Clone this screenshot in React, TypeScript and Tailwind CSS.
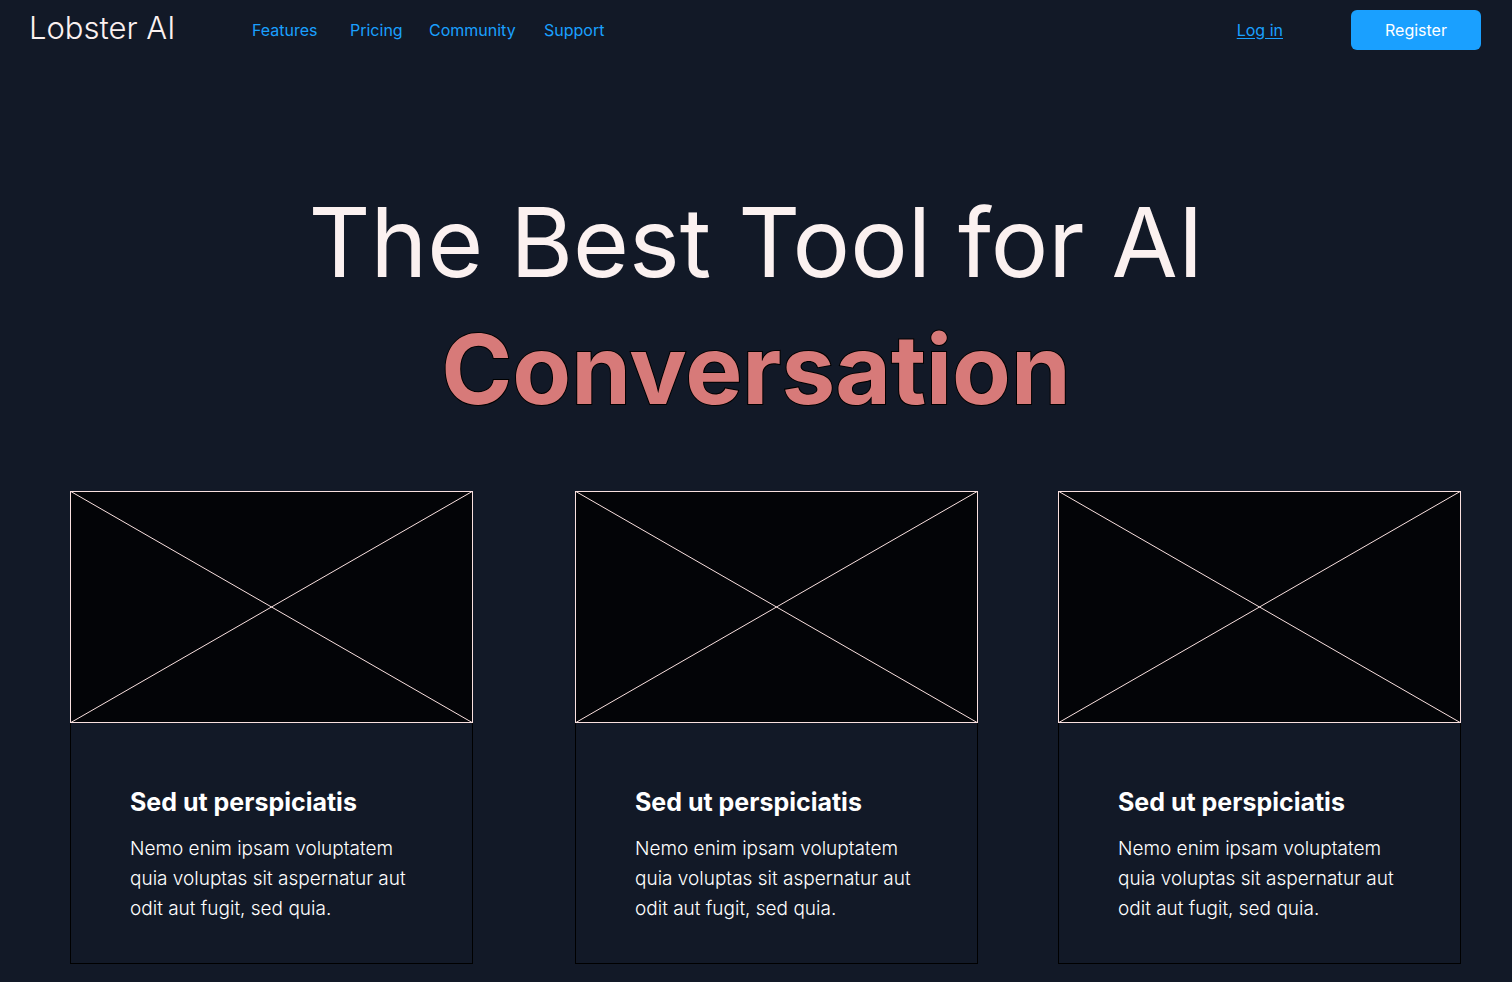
const links = ["Features", "Pricing", "Community", "Support"];

const cards = [
  { id: 1, spacing: "mr-[22px]" },
  { id: 2, spacing: "" },
  { id: 3, spacing: "" },
];

function Placeholder() {
  return (
    <svg
      className="block h-[232px] w-full bg-[#030407] text-[#f9e0df]"
      role="img"
      aria-label="Image placeholder"
    >
      <line x1="0" y1="0" x2="100%" y2="100%" stroke="currentColor" />
      <line x1="0" y1="100%" x2="100%" y2="0" stroke="currentColor" />
      <rect width="100%" height="100%" fill="none" stroke="currentColor" strokeWidth="2" />
    </svg>
  );
}

function Card({ spacing }: { spacing: string }) {
  return (
    <article className={`min-w-0 flex-1 ${spacing}`}>
      <Placeholder />
      <div className="border border-t-0 border-black pt-16 pr-8 pb-[39px] pl-[59px] text-white">
        <h2 className="text-[25px] leading-[30px] font-bold">Sed ut perspiciatis</h2>
        <p className="mt-[17px] text-[19px] leading-[30px] font-light">
          Nemo enim ipsam voluptatem
          <br />
          quia voluptas sit aspernatur aut
          <br />
          odit aut fugit, sed quia.
        </p>
      </div>
    </article>
  );
}

export default function App() {
  return (
    <div className="min-h-screen bg-[#121927] font-['Inter',sans-serif]">
      <header className="flex h-[60px] items-center pr-[31px] pl-[29px]">
        <a href="#" className="w-[223px] pb-1 text-[31px] leading-9 font-light text-[#fbf1f0]">
          Lobster AI
        </a>
        <nav className="grid grid-cols-[98px_79px_115px_auto] text-base text-[#1aa0ff]">
          {links.map((link) => (
            <a key={link} href="#">
              {link}
            </a>
          ))}
        </nav>
        <div className="ml-auto flex items-center gap-[68px] text-base">
          <a href="#" className="text-[#1aa0ff] underline underline-offset-2">
            Log in
          </a>
          <button type="button" className="h-10 w-[130px] rounded-md bg-[#1aa0ff] text-white">
            Register
          </button>
        </div>
      </header>
      <main>
        <h1 className="pt-[119px] text-center text-8xl leading-[127px] text-[#fbf1f0]">
          The Best Tool for AI
          <br />
          <strong className="font-bold text-[#d77a79] [paint-order:stroke_fill] [-webkit-text-stroke:2px_#000]">
            Conversation
          </strong>
        </h1>
        <section className="mt-[58px] flex gap-20 pr-[51px] pb-[18px] pl-[70px]">
          {cards.map((card) => (
            <Card key={card.id} spacing={card.spacing} />
          ))}
        </section>
      </main>
    </div>
  );
}
